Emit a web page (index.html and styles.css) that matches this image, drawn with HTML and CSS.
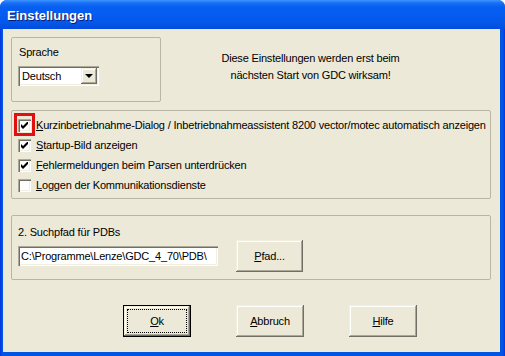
FILE: index.html
```html
<!DOCTYPE html>
<html lang="de">
<head>
    <meta charset="UTF-8">
    <meta name="viewport" content="width=device-width, initial-scale=1.0">
    <title>Einstellungen</title>
    <link rel="stylesheet" href="styles.css">
</head>
<body>
    <div class="window">
        <div class="titlebar">
            <span class="title">Einstellungen</span>
        </div>
        <div class="client">
            <div class="top-row">
                <div class="group group-lang">
                    <div class="label">Sprache</div>
                    <div class="combo">
                        <span class="combo-value">Deutsch</span>
                        <span class="combo-btn"><span class="arrow"></span></span>
                    </div>
                </div>
                <p class="notice">Diese Einstellungen werden erst beim<br>nächsten Start von GDC wirksam!</p>
            </div>

            <div class="group group-options">
                <div class="check-row">
                    <span class="check-wrap marked">
                        <span class="check">
                            <svg width="7" height="7" viewBox="0 0 7 7"><polygon points="0,2 2,4 7,-1 7,2 2,7 0,5" fill="#000"/></svg>
                        </span>
                    </span>
                    <span class="check-text"><u>K</u>urzinbetriebnahme-Dialog / Inbetriebnahmeassistent 8200 vector/motec automatisch anzeigen</span>
                </div>
                <div class="check-row">
                    <span class="check-wrap">
                        <span class="check">
                            <svg width="7" height="7" viewBox="0 0 7 7"><polygon points="0,2 2,4 7,-1 7,2 2,7 0,5" fill="#000"/></svg>
                        </span>
                    </span>
                    <span class="check-text"><u>S</u>tartup-Bild anzeigen</span>
                </div>
                <div class="check-row">
                    <span class="check-wrap">
                        <span class="check">
                            <svg width="7" height="7" viewBox="0 0 7 7"><polygon points="0,2 2,4 7,-1 7,2 2,7 0,5" fill="#000"/></svg>
                        </span>
                    </span>
                    <span class="check-text"><u>F</u>ehlermeldungen beim Parsen unterdrücken</span>
                </div>
                <div class="check-row">
                    <span class="check-wrap">
                        <span class="check"></span>
                    </span>
                    <span class="check-text"><u>L</u>oggen der Kommunikationsdienste</span>
                </div>
            </div>

            <div class="group group-path">
                <div class="label">2. Suchpfad für PDBs</div>
                <div class="path-row">
                    <div class="field">C:\Programme\Lenze\GDC_4_70\PDB\</div>
                    <button class="btn btn-path"><u>P</u>fad...</button>
                </div>
            </div>

            <div class="actions">
                <button class="btn default"><span class="focus"><u>O</u>k</span></button>
                <button class="btn"><u>A</u>bbruch</button>
                <button class="btn"><u>H</u>ilfe</button>
            </div>
        </div>
    </div>
</body>
</html>
```

FILE: styles.css
```css
* {
    margin: 0;
    padding: 0;
    box-sizing: border-box;
}

body {
    background: #ffffff;
    font-family: "Liberation Sans", Arial, sans-serif;
    font-size: 11px;
    letter-spacing: -0.18px;
    color: #000000;
}

.window {
    width: 505px;
    height: 356px;
    display: flex;
    flex-direction: column;
    background: linear-gradient(90deg, #0831d9 0, #0055e5 2px, #0055e5 calc(100% - 2px), #0831d9 100%);
    border-radius: 7px 7px 0 0;
    overflow: hidden;
}

.titlebar {
    height: 29px;
    display: flex;
    align-items: center;
    padding-left: 7px;
    background: linear-gradient(180deg, #3d95ff 0, #1a6ff5 3px, #075ff2 7px, #055cf0 50%, #0457e8 80%, #014cdc 100%);
}

.title {
    color: #ffffff;
    font-weight: bold;
    font-size: 13px;
    letter-spacing: 0;
    text-shadow: 1px 1px 0 #0a1e6e;
    padding-top: 2px;
}

.client {
    flex: 1;
    margin: 0 5px 4px 3px;
    background: #ece9d8;
    padding: 8px 9px 0 8px;
}

.group {
    border: 1px solid #b9b6a4;
    border-radius: 2px;
}

.label {
    line-height: 13px;
}

.top-row {
    display: flex;
    align-items: flex-start;
}

.group-lang {
    width: 150px;
    height: 65px;
    padding: 8px 6px 0 6px;
}

.group-lang .label {
    margin-left: 1px;
    margin-bottom: 7px;
}

.combo {
    width: 81px;
    height: 20px;
    display: flex;
    align-items: stretch;
    background: #ffffff;
    padding: 2px;
    box-shadow: inset 1px 1px #aca899, inset 2px 2px #716f64, inset -1px -1px #ffffff, inset -2px -2px #f1efe2;
}

.combo-value {
    flex: 1;
    padding-left: 2px;
    line-height: 16px;
}

.combo-btn {
    width: 16px;
    display: flex;
    align-items: center;
    justify-content: center;
    background: #ece9d8;
    box-shadow: inset -1px -1px #716f64, inset 1px 1px #f1efe2, inset -2px -2px #aca899, inset 2px 2px #ffffff;
}

.arrow {
    width: 0;
    height: 0;
    border-left: 4px solid transparent;
    border-right: 4px solid transparent;
    border-top: 4px solid #000000;
    margin-left: -1px;
}

.notice {
    width: 299px;
    margin-top: 13px;
    text-align: center;
    line-height: 17px;
}

.group-options {
    height: 89px;
    margin-top: 8px;
    padding: 8px 6px 0 6px;
}

.check-row {
    display: flex;
    align-items: flex-start;
    height: 20px;
}

.check-wrap {
    position: relative;
    display: flex;
    width: 13px;
    height: 13px;
    margin-right: 5px;
}

.check-wrap.marked::after {
    content: "";
    position: absolute;
    left: -4px;
    top: -6px;
    right: -4px;
    bottom: -4px;
    border: 3px solid #e01010;
}

.check {
    width: 13px;
    height: 13px;
    display: flex;
    align-items: center;
    justify-content: center;
    background: #ffffff;
    box-shadow: inset 1px 1px #aca899, inset 2px 2px #716f64, inset -1px -1px #ffffff, inset -2px -2px #f1efe2;
}

.check-text {
    line-height: 13px;
    white-space: nowrap;
}

.group-path {
    height: 65px;
    margin-top: 16px;
    padding: 10px 6px 0 6px;
}

.group-path .label {
    margin-bottom: 1px;
}

.path-row {
    display: flex;
    align-items: center;
}

.field {
    width: 200px;
    height: 20px;
    background: #ffffff;
    padding: 0 3px;
    line-height: 20px;
    white-space: nowrap;
    overflow: hidden;
    box-shadow: inset 1px 1px #aca899, inset 2px 2px #716f64, inset -1px -1px #ffffff, inset -2px -2px #f1efe2;
}

.btn {
    width: 68px;
    height: 32px;
    border: none;
    background: #ece9d8;
    font-family: inherit;
    font-size: 11px;
    letter-spacing: inherit;
    color: #000000;
    display: flex;
    align-items: center;
    justify-content: center;
    box-shadow: inset -1px -1px #716f64, inset 1px 1px #f1efe2, inset -2px -2px #aca899, inset 2px 2px #ffffff;
}

.btn-path {
    width: 67px;
    margin-left: 18px;
}

.actions {
    display: flex;
    gap: 45px;
    margin-top: 25px;
    padding-left: 112px;
}

.btn.default {
    box-shadow: inset 0 0 0 1px #000000, inset -2px -2px #716f64, inset 2px 2px #f1efe2, inset -3px -3px #aca899, inset 3px 3px #ffffff;
    padding: 4px;
}

.focus {
    flex: 1;
    align-self: stretch;
    display: flex;
    align-items: center;
    justify-content: center;
    border: 1px dotted #000000;
}
```
